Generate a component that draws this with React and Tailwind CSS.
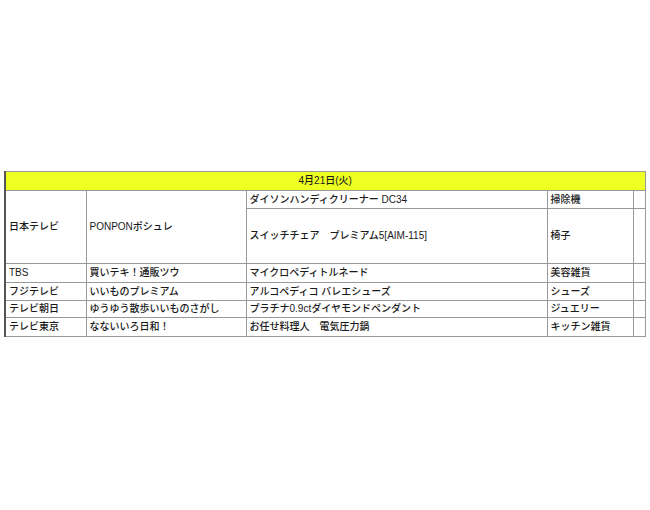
const rows = [
  { ch: "TBS", prog: "買いテキ！通販ツウ", item: "マイクロペディトルネード", cat: "美容雑貨", h: "h-[19px]" },
  { ch: "フジテレビ", prog: "いいものプレミアム", item: "アルコペディコ バレエシューズ", cat: "シューズ", h: "h-[18px]" },
  { ch: "テレビ朝日", prog: "ゆうゆう散歩いいものさがし", item: "プラチナ0.9ctダイヤモンドペンダント", cat: "ジュエリー", h: "h-[17px]" },
  { ch: "テレビ東京", prog: "なないいろ日和！", item: "お任せ料理人　電気圧力鍋", cat: "キッチン雑貨", h: "h-[19px]" },
];

const cell = "border border-[#999] px-[3px] py-0 leading-none align-middle";

export default function App() {
  return (
    <div
      className="w-[650px] h-[510px] bg-white pt-[171px] pl-[4px] text-[10px] text-[#1a1a1a] font-medium"
      style={{ fontFamily: '"Liberation Sans", "Noto Sans CJK JP", sans-serif' }}
    >
      <table className="border-collapse table-fixed w-[640px] border-l-2 border-l-[#555]">
        <colgroup>
          <col className="w-[81px]" />
          <col className="w-[160px]" />
          <col className="w-[301px]" />
          <col className="w-[86px]" />
          <col className="w-[12px]" />
        </colgroup>
        <tbody>
          <tr className="h-[19px] bg-[#eeff22]">
            <td colSpan={5} className={`${cell} text-center`}>4月21日(火)</td>
          </tr>
          <tr className="h-[18px]">
            <td rowSpan={2} className={cell}>日本テレビ</td>
            <td rowSpan={2} className={cell}>PONPONポシュレ</td>
            <td className={cell}>ダイソンハンディクリーナー DC34</td>
            <td className={cell}>掃除機</td>
            <td className={cell}></td>
          </tr>
          <tr className="h-[55px]">
            <td className={cell}>スイッチチェア　プレミアム5[AIM-115]</td>
            <td className={cell}>椅子</td>
            <td className={cell}></td>
          </tr>
          {rows.map((r) => (
            <tr key={r.ch} className={r.h}>
              <td className={cell}>{r.ch}</td>
              <td className={cell}>{r.prog}</td>
              <td className={cell}>{r.item}</td>
              <td className={cell}>{r.cat}</td>
              <td className={cell}></td>
            </tr>
          ))}
        </tbody>
      </table>
    </div>
  );
}
